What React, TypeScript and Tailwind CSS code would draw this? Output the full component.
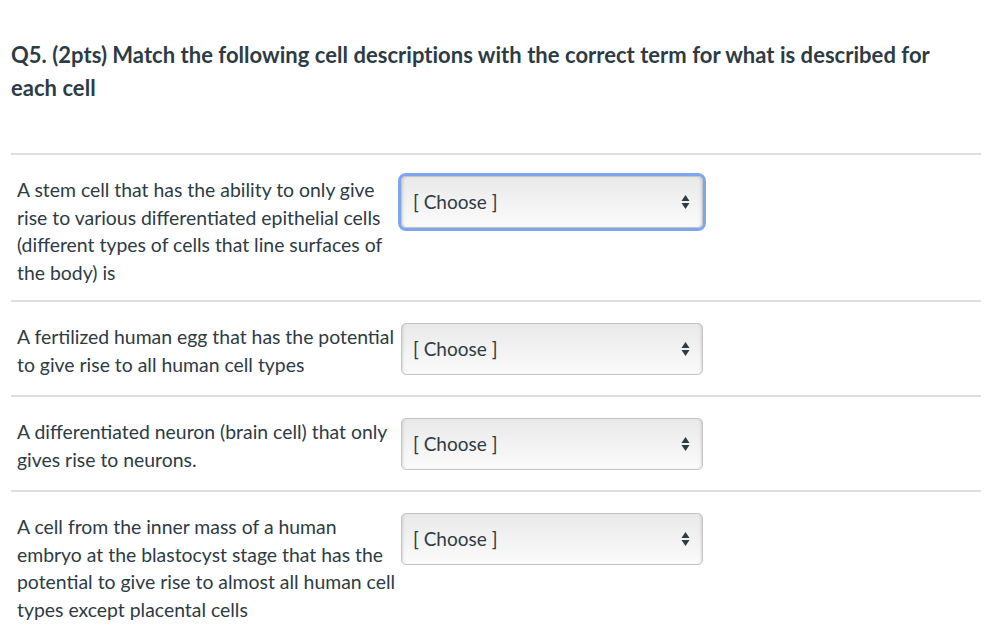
import React from 'react';

const rows = [
  {
    text: 'A stem cell that has the ability to only give rise to various differentiated epithelial cells (different types of cells that line surfaces of the body) is',
    focused: true,
    pad: 'pt-[21px] pb-[14px]',
  },
  {
    text: 'A fertilized human egg that has the potential to give rise to all human cell types',
    focused: false,
    pad: 'pt-[21px] pb-[17px]',
  },
  {
    text: 'A differentiated neuron (brain cell) that only gives rise to neurons.',
    focused: false,
    pad: 'pt-[21px] pb-[17px]',
  },
  {
    text: 'A cell from the inner mass of a human embryo at the blastocyst stage that has the potential to give rise to almost all human cell types except placental cells',
    focused: false,
    pad: 'pt-[21px] pb-[17px]',
  },
];

const Arrows = () => (
  <svg width="9" height="16" viewBox="0 0 9 16" className="shrink-0">
    <path d="M4.5 1 L8.5 7 L0.5 7 Z" fill="#2d3b45" />
    <path d="M0.5 9 L8.5 9 L4.5 15 Z" fill="#2d3b45" />
  </svg>
);

const ChooseSelect = ({ focused }: { focused: boolean }) => (
  <div
    className={`flex h-[52px] w-[302px] shrink-0 items-center justify-between rounded-[5px] border border-[#c4c4c4] bg-gradient-to-b from-[#e9e9e9] to-[#fbfbfb] pl-[11px] pr-[12px] shadow-[inset_3px_0_3px_-2px_rgba(0,0,0,0.12),inset_-3px_0_3px_-2px_rgba(0,0,0,0.12)] ${
      focused ? 'outline-[3px] outline-solid outline-[#7ea6ec]' : ''
    }`}
  >
    <span className="text-[19px] text-[#2d3b45]">[ Choose ]</span>
    <Arrows />
  </div>
);

export default function App() {
  return (
    <div
      className="min-h-screen bg-white px-[11px] text-[#2d3b45]"
      style={{ fontFamily: 'Lato, "Open Sans", sans-serif' }}
    >
      <h1 className="max-w-[930px] pt-[38px] pb-[49px] text-[22px] font-bold leading-[33px] tracking-[0.03px]">
        Q5. (2pts) Match the following cell descriptions with the correct term for what is described for each cell
      </h1>
      <div className="mr-[1px]">
        {rows.map((r, i) => (
          <div key={i} className={`flex items-start border-t-2 border-[#dedede] pl-[6px] ${r.pad}`}>
            <p className="w-[384px] shrink-0 text-[19.4px] leading-[27.5px]">{r.text}</p>
            <ChooseSelect focused={r.focused} />
          </div>
        ))}
      </div>
    </div>
  );
}
